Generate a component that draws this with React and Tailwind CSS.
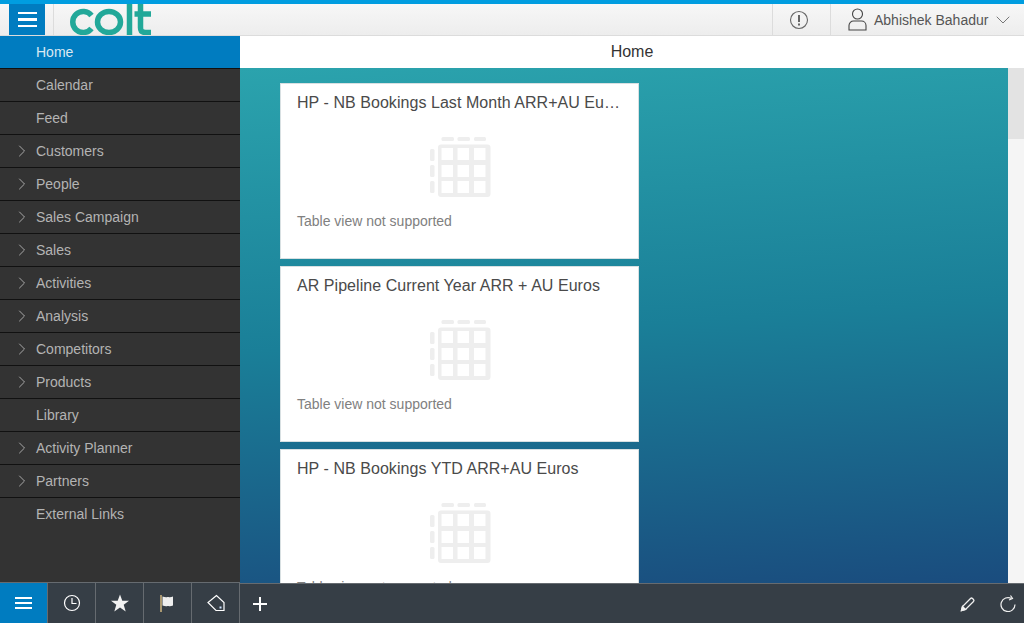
import React from "react";
import { ChevronRight, ChevronDown } from "lucide-react";

const navItems = [
  { label: "Home", active: true },
  { label: "Calendar" },
  { label: "Feed" },
  { label: "Customers", arrow: true },
  { label: "People", arrow: true },
  { label: "Sales Campaign", arrow: true },
  { label: "Sales", arrow: true },
  { label: "Activities", arrow: true },
  { label: "Analysis", arrow: true },
  { label: "Competitors", arrow: true },
  { label: "Products", arrow: true },
  { label: "Library" },
  { label: "Activity Planner", arrow: true },
  { label: "Partners", arrow: true },
  { label: "External Links", last: true },
];

const cards = [
  "HP - NB Bookings Last Month ARR+AU Euros",
  "AR Pipeline Current Year ARR + AU Euros",
  "HP - NB Bookings YTD ARR+AU Euros",
];

const ColtLogo = () => (
  <svg width="84" height="31" viewBox="0 0 84 31" fill="none" stroke="#22a899" strokeWidth="5.500">
    <path d="M22.500 11.500a10.500 10.500 0 1 0 0 13" />
    <ellipse cx="40" cy="18" rx="11.500" ry="10.500" />
    <path d="M60.500 0v31" />
    <path d="M71.500 0v23.500c0 3.500 1.500 5 5 5h5.500M65.500 10h16.500" />
  </svg>
);

const TableIcon = () => (
  <svg width="61" height="60" viewBox="0 0 61 60" fill="#eeeeee">
    <rect x="11.500" y="0" width="12.500" height="4" rx="1.500" />
    <rect x="27.500" y="0" width="12.500" height="4" rx="1.500" />
    <rect x="44" y="0" width="12" height="4" rx="1.500" />
    <rect x="0" y="12" width="4.500" height="12" rx="1.500" />
    <rect x="0" y="28" width="4.500" height="12" rx="1.500" />
    <rect x="0" y="44" width="4.500" height="12" rx="1.500" />
    <path
      fillRule="evenodd"
      d="M11 7.500h46.500a3 3 0 0 1 3 3V57a3 3 0 0 1-3 3H11a3 3 0 0 1-3-3V10.500a3 3 0 0 1 3-3ZM11.500 11v12h11.500V11ZM27.500 11v12h11.500V11ZM44 11v12h11.500V11ZM11.500 28v12h11.500V28ZM27.500 28v12h11.500V28ZM44 28v12h11.500V28ZM11.500 44v12h11.500V44ZM27.500 44v12h11.500V44ZM44 44v12h11.500V44Z"
    />
  </svg>
);

const Card = ({ title }) => (
  <div className="h-[176px] w-[359px] shrink-0 border border-[#d8e0e2] bg-white">
    <div className="truncate px-4 pt-[9px] text-base leading-[20px] tracking-[0.05px] text-[#4a4a4a]">{title}</div>
    <div className="mt-[24px] flex justify-center pl-[2px]">
      <TableIcon />
    </div>
    <div className="mt-4 pl-4 text-sm leading-[16px] text-[#808080]">Table view not supported</div>
  </div>
);

const BarTab = ({ children, active }) => (
  <div
    className={`flex h-full w-[48px] items-center justify-center border-r border-[#666b70] ${
      active ? "bg-[#007cc0]" : ""
    }`}
  >
    {children}
  </div>
);

export default function App() {
  return (
    <div className="flex h-[623px] w-[1024px] flex-col overflow-hidden bg-white font-['Liberation_Sans',Arial,sans-serif]">
      <div className="h-1 bg-[#009de0]" />

      {/* top bar */}
      <div className="flex h-[32px] items-stretch border-b border-[#dcdcdc] bg-gradient-to-b from-[#f7f7f7] to-[#ededed]">
        <div className="ml-[9px] flex w-[36px] items-center justify-center bg-[#007cc0]">
          <div className="flex w-[19px] flex-col gap-[4px]">
            <div className="h-[2.500px] bg-white" />
            <div className="h-[2.500px] bg-white" />
            <div className="h-[2.500px] bg-white" />
          </div>
        </div>
        <div className="ml-[8px] w-px bg-[#dcdcdc]" />
        <div className="ml-[15px] overflow-hidden">
          <ColtLogo />
        </div>
        <div className="ml-auto flex w-[58px] items-center justify-center border-l border-[#dcdcdc] pr-[5px]">
          <svg width="20" height="20" viewBox="0 0 20 20" fill="none" stroke="#666">
            <circle cx="10" cy="10" r="8.500" strokeWidth="1.100" />
            <path d="M10 5v7" strokeWidth="2" />
            <path d="M10 13.500v2" strokeWidth="2" />
          </svg>
        </div>
        <div className="flex w-[194px] items-center border-l border-[#dcdcdc] pl-[17px] text-sm text-[#555]">
          <svg width="19" height="23" viewBox="0 0 19 23" fill="none" stroke="#444" strokeWidth="1.100">
            <circle cx="9.500" cy="6" r="5" />
            <path d="M1 22v-4.500a4.500 4.500 0 0 1 4.500-4.500h8a4.500 4.500 0 0 1 4.500 4.500V22Z" />
          </svg>
          <span className="ml-[7px]">Abhishek Bahadur</span>
          <ChevronDown size={24} strokeWidth={1} className="ml-[3px] shrink-0 text-[#777]" />
        </div>
      </div>

      <div className="flex min-h-0 flex-1">
        {/* side menu */}
        <div className="w-[240px] shrink-0 bg-[#333333]">
          {navItems.map((item) => (
            <div
              key={item.label}
              className={`relative flex h-[33px] items-center pl-9 text-sm ${
                item.last ? "pb-px" : "border-b border-[#111]"
              } ${item.active ? "bg-[#007cc0] text-[#dbe9f2]" : "text-[#b4b4b4]"}`}
            >
              {item.arrow && (
                <ChevronRight size={20} strokeWidth={1.200} className="absolute left-[12px] text-[#a8a8a8]" />
              )}
              {item.label}
            </div>
          ))}
        </div>

        <div className="flex min-w-0 flex-1 flex-col">
          <div className="flex h-[32px] shrink-0 items-center justify-center bg-white text-base text-[#333]">
            Home
          </div>
          <div className="flex min-h-0 flex-1">
            <div className="flex min-w-0 flex-1 flex-col gap-[7px] overflow-hidden bg-[linear-gradient(176deg,#2ba3ad_0%,#1a7f98_50%,#1a4c7e_100%)] pl-10 pt-[15px]">
              {cards.map((title) => (
                <Card key={title} title={title} />
              ))}
            </div>
            <div className="w-4 shrink-0 bg-[#f5f5f5]">
              <div className="h-[71px] bg-[#e3e3e3]" />
            </div>
          </div>
        </div>
      </div>

      {/* bottom bar */}
      <div className="flex h-[40px] shrink-0 items-stretch bg-[#363e46]">
        <div className="relative -mt-px flex h-[41px] border-t border-[#666b70]">
          <BarTab active>
            <div className="flex w-[17px] flex-col gap-[3px]">
              <div className="h-[2px] bg-white" />
              <div className="h-[2px] bg-white" />
              <div className="h-[2px] bg-white" />
            </div>
          </BarTab>
          <BarTab>
            <svg width="18" height="18" viewBox="0 0 18 18" fill="none" stroke="#fff" strokeWidth="1.200">
              <circle cx="9" cy="9" r="7.500" />
              <path d="M9 4v5.500h4.500" />
            </svg>
          </BarTab>
          <BarTab>
            <svg width="18" height="18" viewBox="0 0 18 18" fill="#f2f2f2">
              <path d="M9 .5l2.300 6.200H18l-5.300 4.100 2 6.700L9 13.600 3.300 17.500l2-6.700L0 6.700h6.700Z" />
            </svg>
          </BarTab>
          <BarTab>
            <svg width="15" height="17" viewBox="0 0 15 17" fill="none">
              <path d="M1 0v17" stroke="#e8c98a" strokeWidth="1.300" />
              <path d="M2.500 1.500c3 1.300 5.500.5 5.500.5s2.500.8 5-.5v9c-2.500 1.300-5 .5-5 .5s-2.500.8-5.500-.5Z" fill="#eeeeee" />
            </svg>
          </BarTab>
          <BarTab>
            <svg width="18" height="18" viewBox="0 0 18 18" fill="none" stroke="#fff" strokeWidth="1.200">
              <path d="M9.500 1.500L1 8.500l8 8h8v-8Z" />
              <rect x="12.500" y="12.500" width="2" height="2" fill="#cfe3ff" strokeWidth="0" />
            </svg>
          </BarTab>
        </div>
        <div className="flex flex-1 items-stretch border-t border-[#666b70]">
          <div className="flex w-[40px] items-center justify-center">
            <svg width="16" height="16" viewBox="0 0 16 16" stroke="#fff" strokeWidth="2">
              <path d="M8 1v14M1 8h14" />
            </svg>
          </div>
          <div className="ml-auto flex items-center gap-[24px] pr-[8px]">
            <svg width="16" height="16" viewBox="0 0 16 16" fill="none" stroke="#f0f0f0" strokeWidth="1.300">
              <path d="M1.500 14.500l1-4 8-8a1.500 1.500 0 0 1 2 0l1 1a1.500 1.500 0 0 1 0 2l-8 8Z" />
              <path d="M1.500 14.500l1-4 3 3Z" fill="#f0f0f0" />
            </svg>
            <svg width="16" height="17" viewBox="0 0 16 17" fill="none" stroke="#f0f0f0" strokeWidth="1.200">
              <path d="M11.500 3.500A7 7 0 1 0 15 9.500" />
              <path d="M10.500 .5l2 3-3.500 1.500" />
            </svg>
          </div>
        </div>
      </div>
    </div>
  );
}
